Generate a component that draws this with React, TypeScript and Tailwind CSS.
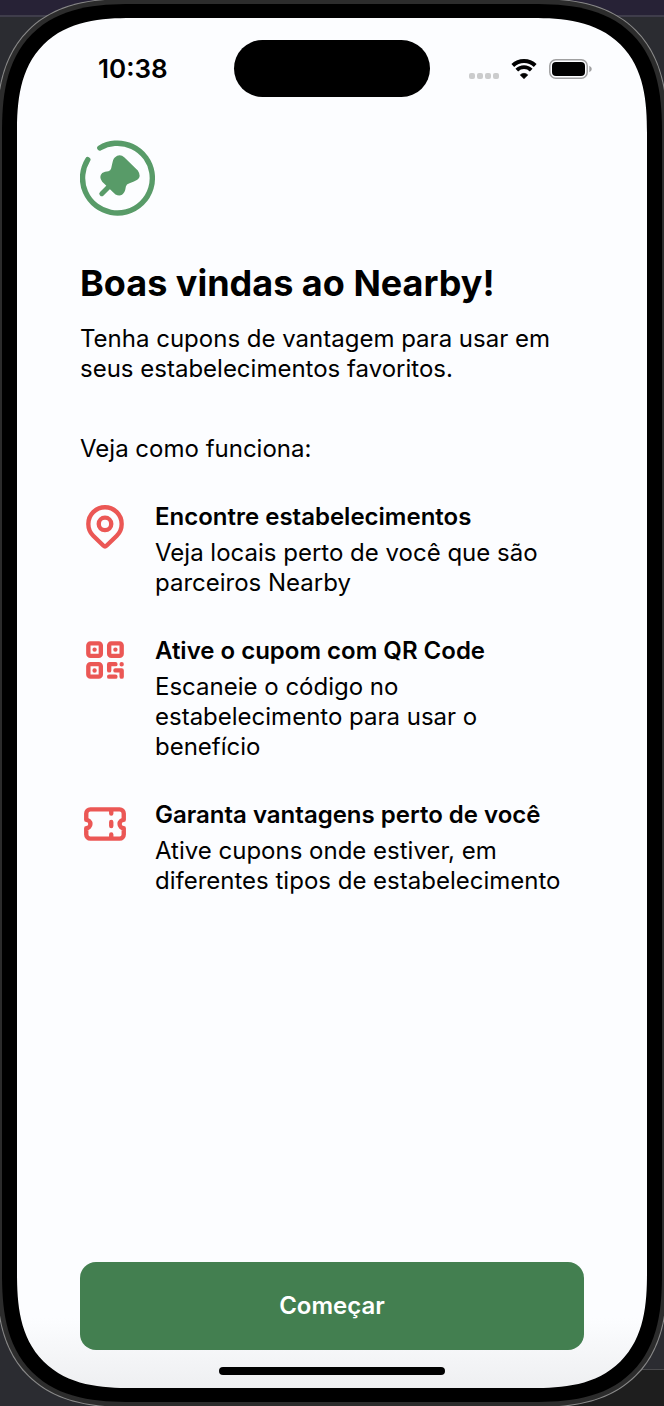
import type { ReactNode } from "react";

function Logo() {
  return (
    <svg viewBox="0 0 76 76" className="size-[76px] text-[#589b68]" fill="none" aria-hidden="true">
      <path
        d="M19.8 8A34.9 34.9 0 1 1 7.8 19.7"
        stroke="currentColor"
        strokeWidth="5.4"
        strokeLinecap="round"
      />
      <path d="M31 44.5 21.8 53.7" stroke="currentColor" strokeWidth="5" strokeLinecap="round" />
      <path
        fill="currentColor"
        d="M34.8 17.6Q39.5 12.8 44.5 17.4L57.8 30.4Q61.8 36.4 57.3 39.8Q54.5 41.6 49.5 43.2Q46.3 44 45.9 46.5Q45.4 50 44.4 52Q41 57.6 35.5 54.4Q33 52.4 30.5 49.8L22.2 41.8Q18.4 36.8 22.2 33Q24.8 31.4 28.4 31.2Q30.6 30.6 31.2 28.2Q32.2 23.6 33 20.5Q33.6 18.6 34.8 17.6Z"
      />
    </svg>
  );
}

function LineIcon({ children }: { children: ReactNode }) {
  return (
    <svg
      viewBox="0 0 24 24"
      className="size-[50px] shrink-0 text-[#eb5755]"
      fill="none"
      stroke="currentColor"
      strokeWidth="2.1"
      strokeLinecap="round"
      strokeLinejoin="round"
      aria-hidden="true"
    >
      {children}
    </svg>
  );
}

const steps = [
  {
    title: "Encontre estabelecimentos",
    text: "Veja locais perto de você que são parceiros Nearby",
    icon: (
      <>
        <circle cx="12" cy="11" r="3" />
        <path d="M17.657 16.657 12.7 21.5a1 1 0 0 1-1.4 0l-4.957-4.843a8 8 0 1 1 11.314 0z" />
      </>
    ),
  },
  {
    title: "Ative o cupom com QR Code",
    text: "Escaneie o código no estabelecimento para usar o benefício",
    icon: (
      <>
        <rect x="4" y="4" width="6" height="6" rx="1" />
        <rect x="14" y="4" width="6" height="6" rx="1" />
        <rect x="4" y="14" width="6" height="6" rx="1" />
        <path d="M7 7v.01M17 7v.01M7 17v.01M14 14h3M20 14v.01M14 14v3M14 20h3M17 17h3M20 17v3" />
      </>
    ),
  },
  {
    title: "Garanta vantagens perto de você",
    text: "Ative cupons onde estiver, em diferentes tipos de estabelecimento",
    icon: (
      <path d="M15 5v2M15 11v2M15 17v2M5 5h14a2 2 0 0 1 2 2v3a2 2 0 0 0 0 4v3a2 2 0 0 1-2 2H5a2 2 0 0 1-2-2v-3a2 2 0 0 0 0-4V7a2 2 0 0 1 2-2" />
    ),
  },
];

function StatusBar() {
  return (
    <div className="grid grid-cols-[1fr_196px_1fr] items-center pt-[22px]">
      <time className="pl-[81px] text-[26px] leading-8 font-semibold">10:38</time>
      <div className="h-[57px] rounded-full bg-black" />
      <div className="flex items-center justify-end gap-3 pr-[55px]">
        <div className="flex gap-0.5 pt-3.5">
          <span className="size-1.5 rounded-[2px] bg-[#cbcccd]" />
          <span className="size-1.5 rounded-[2px] bg-[#cbcccd]" />
          <span className="size-1.5 rounded-[2px] bg-[#cbcccd]" />
          <span className="size-1.5 rounded-[2px] bg-[#cbcccd]" />
        </div>
        <svg viewBox="0 0 26 20" className="h-5 w-[26px]" fill="none" stroke="#000" aria-hidden="true">
          <path d="M1.8 6.5A16.2 16.2 0 0 1 24.2 6.5" strokeWidth="4" />
          <path d="M5.8 11.2A10.2 10.2 0 0 1 20.2 11.2" strokeWidth="3.8" />
          <path d="M13 19.8 9.2 15.9A5.4 5.4 0 0 1 16.8 15.9Z" fill="#000" strokeWidth="0.6" />
        </svg>
        <svg viewBox="0 0 43 20" className="h-5 w-[43px]" fill="none" aria-hidden="true">
          <rect x="0.8" y="0.8" width="37.4" height="18.4" rx="6" stroke="#a0a0a1" strokeWidth="1.5" />
          <rect x="3" y="3" width="33" height="14" rx="4" fill="#000" />
          <path d="M40.3 6.8Q42.8 8 42.8 10T40.3 13.2Z" fill="#a0a0a1" />
        </svg>
      </div>
    </div>
  );
}

export default function App() {
  return (
    <div className="flex min-h-screen overflow-hidden [background:linear-gradient(#4a4a4c_0_1px,#1e1e1e_1px)_right_bottom/50%_37px_no-repeat,linear-gradient(#272236_0_15px,#3f3d4b_15px_17px,#2b2c31_17px)] font-['Inter','Liberation_Sans',sans-serif] text-black">
      <div className="-mx-1 -my-0.5 flex flex-1 rounded-[104px] border border-[#8a8a8a] bg-[#2c2c2c] px-[5px] py-[5px] supports-[corner-shape:squircle]:rounded-[138px] supports-[corner-shape:squircle]:[corner-shape:superellipse(1.4)]">
        <div className="flex flex-1 rounded-[102px] bg-black px-[15px] py-[14px] supports-[corner-shape:squircle]:rounded-[130px] supports-[corner-shape:squircle]:[corner-shape:superellipse(1.4)]">
          <div className="flex flex-1 flex-col overflow-hidden rounded-[92px] bg-[linear-gradient(to_top,#eeeff1,#fcfdff_70px)] supports-[corner-shape:squircle]:rounded-[115px] supports-[corner-shape:squircle]:[corner-shape:superellipse(1.4)]">
            <StatusBar />
            <main className="flex flex-1 flex-col px-[63px] pt-[43px]">
              <Logo />
              <h1 className="mt-11 text-[36px] leading-[46px] font-bold">Boas vindas ao Nearby!</h1>
              <p className="mt-[18px] text-2xl leading-[30px]">
                Tenha cupons de vantagem para usar em seus estabelecimentos favoritos.
              </p>
              <p className="mt-[50px] text-2xl leading-[30px]">Veja como funciona:</p>
              <ul className="mt-[37px] flex flex-col gap-[37px]">
                {steps.map((step) => (
                  <li key={step.title} className="flex gap-[25px]">
                    <LineIcon>{step.icon}</LineIcon>
                    <div className="flex-1">
                      <h2 className="text-2xl leading-8 font-semibold">{step.title}</h2>
                      <p className="mt-[5px] pr-4 text-2xl leading-[30px]">{step.text}</p>
                    </div>
                  </li>
                ))}
              </ul>
              <button
                type="button"
                className="mt-auto h-[88px] rounded-2xl bg-[#437f50] text-2xl font-semibold text-white"
              >
                Começar
              </button>
            </main>
            <div className="mt-[17px] mb-[13px] h-2 w-[226px] self-center rounded-full bg-black" />
          </div>
        </div>
      </div>
    </div>
  );
}
